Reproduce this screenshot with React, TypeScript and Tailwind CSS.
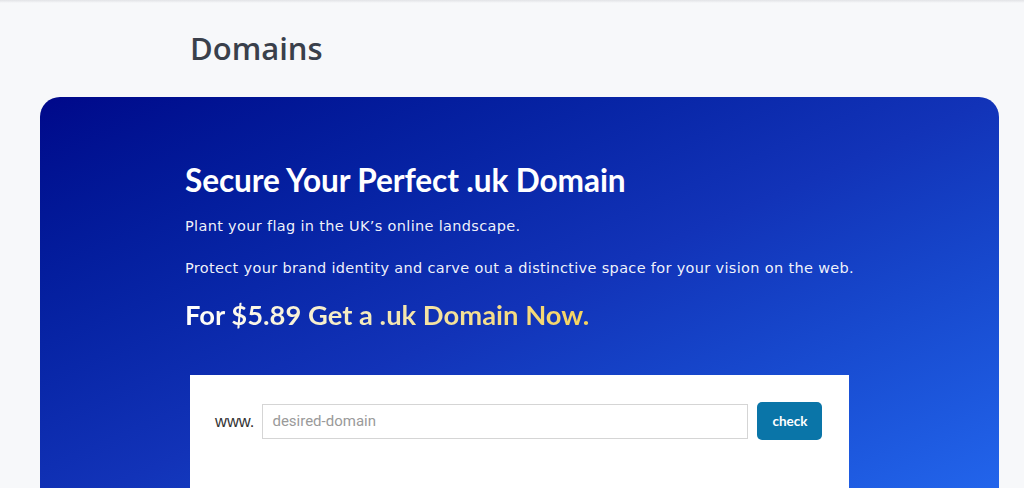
import React from "react";

export default function App() {
  return (
    <div className="w-[1024px] h-[488px] overflow-hidden bg-[#f7f8fa] relative" style={{ fontFamily: "Lato, 'Noto Sans', sans-serif" }}>
      <div className="absolute top-0 left-0 right-0 h-[3px] bg-gradient-to-b from-[#e2e3e6] to-[#f7f8fa]" />
      <div className="pl-[190px] pt-[28px] h-[97px]">
        <h1 className="text-[31px] leading-[40px] font-semibold text-[#3a404b]" style={{ fontFamily: "'Open Sans', 'Noto Sans', sans-serif" }}>Domains</h1>
      </div>
      <div className="ml-[40px] w-[959px] h-[420px] rounded-t-[20px] bg-gradient-to-br from-[#00088a] via-[#1233b8] to-[#2468ef] pl-[145px] pt-[64px]">
        <h2 className="text-[31.6px] leading-[38px] font-bold text-white tracking-[-0.1px]">Secure Your Perfect .uk Domain</h2>
        <p className="mt-[17px] text-[14.5px] leading-[20px] text-white/95 tracking-[0.33px]" style={{ fontFamily: "'DejaVu Sans', sans-serif" }}>Plant your flag in the UK’s online landscape.</p>
        <p className="mt-[22px] text-[14.5px] leading-[20px] text-white/95 tracking-[0.33px]" style={{ fontFamily: "'DejaVu Sans', sans-serif" }}>Protect your brand identity and carve out a distinctive space for your vision on the web.</p>
        <h3 className="mt-[20px] text-[27.4px] leading-[33px] font-bold">
          <span className="bg-gradient-to-r from-white via-[#f3e7b3] to-[#f6d35c] bg-clip-text text-transparent">For $5.89 Get a .uk Domain Now.</span>
        </h3>
        <div className="mt-[44px] ml-[5px] w-[659px] h-[140px] bg-white pl-[25px] pt-[27px]">
          <div className="flex items-center">
            <span className="text-[16.5px] text-[#333] mr-[8px]" style={{ fontFamily: "'Liberation Sans', Arial, sans-serif" }}>www.</span>
            <div className="w-[486px] h-[35px] border border-[#d5d5d5] flex items-center pl-[9px] text-[15px] text-[#9a9a9a]" style={{ fontFamily: "Roboto, sans-serif" }}>desired-domain</div>
            <button className="ml-[9px] w-[65px] h-[38px] rounded-[5px] bg-[#0a75a8] text-white text-[13.5px] font-bold">check</button>
          </div>
        </div>
      </div>
    </div>
  );
}
